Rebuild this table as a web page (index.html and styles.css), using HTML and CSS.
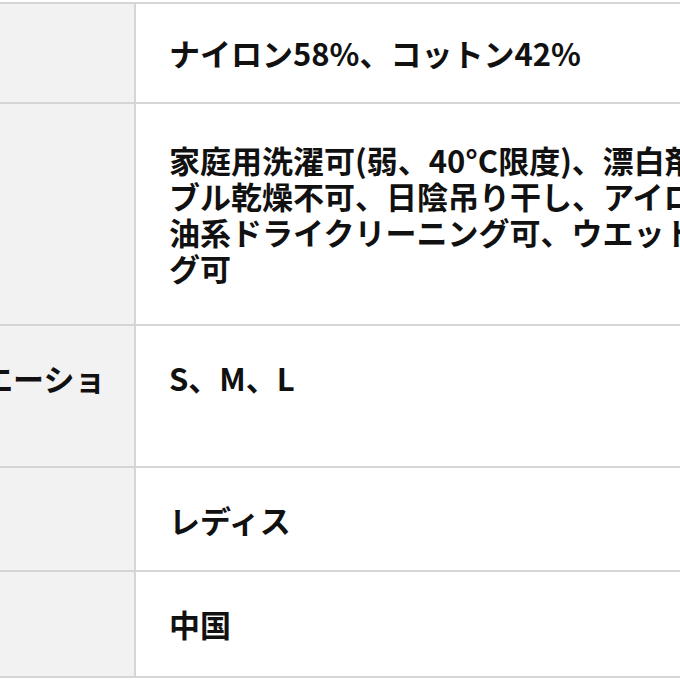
FILE: index.html
```html
<!DOCTYPE html>
<html lang="ja">
<head>
<meta charset="utf-8">
<link rel="stylesheet" href="styles.css">
</head>
<body>
<div class="spec">
  <div class="row r1">
    <div class="label">素材</div>
    <div class="value">ナイロン58%、コットン42%</div>
  </div>
  <div class="row r2">
    <div class="label">お手入れ</div>
    <div class="value">家庭用洗濯可(弱、40°C限度)、漂白剤不可、タン<br>ブル乾燥不可、日陰吊り干し、アイロン(中温)可、石<br>油系ドライクリーニング可、ウエットクリーニン<br>グ可</div>
  </div>
  <div class="row r3">
    <div class="label">サイズバリエーショ<br>ン</div>
    <div class="value">S、M、L</div>
  </div>
  <div class="row r4">
    <div class="label">対象</div>
    <div class="value">レディス</div>
  </div>
  <div class="row r5">
    <div class="label">原産国</div>
    <div class="value">中国</div>
  </div>
</div>
</body>
</html>
```
FILE: styles.css
```css
html, body {
  margin: 0;
  padding: 0;
  background: #ffffff;
  overflow: hidden;
}
body {
  padding-top: 2px;
  font-family: "Noto Sans CJK JP", "Noto Sans", sans-serif;
  font-size: 31px;
  line-height: 36px;
  font-weight: 700;
  color: #111111;
}
.spec {
  margin-left: -207px;
  width: 1100px;
  border-top: 2px solid #d5d5d5;
}
.row {
  display: flex;
  border-bottom: 2px solid #d5d5d5;
}
.label {
  box-sizing: border-box;
  flex: 0 0 343px;
  width: 343px;
  padding-left: 35px;
  background: #f2f2f2;
  border-right: 2px solid #d5d5d5;
  white-space: nowrap;
  overflow: hidden;
}
.value {
  flex: 1;
  padding-left: 33px;
  white-space: nowrap;
}
.r1 .label, .r1 .value { padding-top: 31px; padding-bottom: 31px; }
.r2 .label, .r2 .value { padding-top: 38px; padding-bottom: 38px; }
.r3 .label, .r3 .value { padding-top: 34px; padding-bottom: 34px; }
.r4 .label, .r4 .value { padding-top: 34px; padding-bottom: 32px; }
.r5 .label, .r5 .value { padding-top: 34px; padding-bottom: 34px; }
.r1 .label, .r2 .label, .r4 .label, .r5 .label { color: transparent; }
```
